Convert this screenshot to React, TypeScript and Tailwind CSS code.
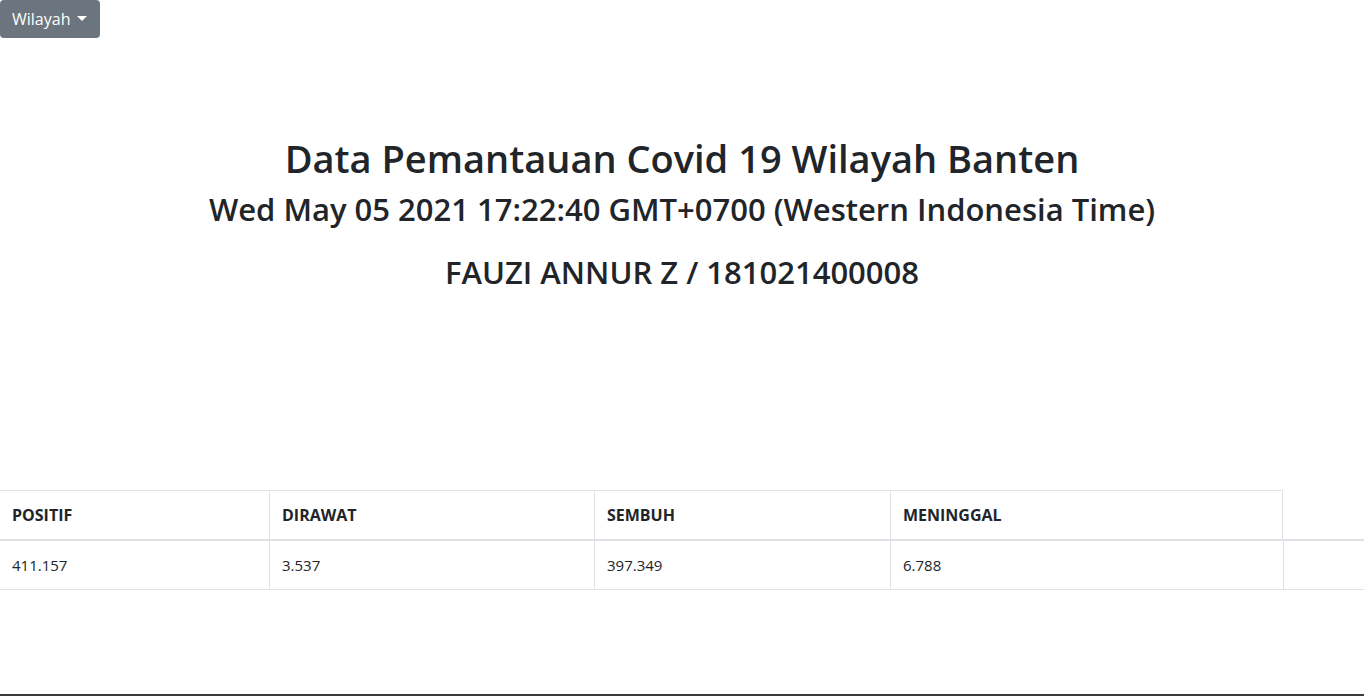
import React from 'react';

const columns = ['POSITIF', 'DIRAWAT', 'SEMBUH', 'MENINGGAL'];
const values = ['411.157', '3.537', '397.349', '6.788'];

const App: React.FC = () => {
  return (
    <div
      className="min-h-screen flex flex-col bg-white text-[#212529] text-[16px] leading-6"
      style={{ fontFamily: '"Open Sans", "Noto Sans", sans-serif' }}
    >
      <div>
        <button className="flex items-center gap-[7px] h-[38px] pl-3 pr-[13px] bg-[#6c757d] text-white rounded-[4px]">
          Wilayah
          <span className="w-0 h-0 border-x-[5px] border-x-transparent border-t-[5px] border-t-white mt-[-2px]"></span>
        </button>
      </div>

      <div className="text-center mt-[98px]">
        <h1 className="text-[38px] leading-[44px] font-semibold">Data Pemantauan Covid 19 Wilayah Banten</h1>
        <h2 className="text-[31px] leading-[36px] font-semibold mt-[11px]">Wed May 05 2021 17:22:40 GMT+0700 (Western Indonesia Time)</h2>
        <h3 className="text-[31px] leading-[36px] font-semibold mt-[27px]">FAUZI ANNUR Z / 181021400008</h3>
      </div>

      <div className="mt-[200px]">
        <div className="grid grid-cols-[269px_325px_296px_393px_1fr]">
          {columns.map((c, i) => (
            <div
              key={c}
              className={`px-3 py-3 font-bold text-[16px] border-t border-[#dee2e6] ${i > 0 ? 'border-l' : ''} ${i === columns.length - 1 ? 'border-r' : ''}`}
            >
              {c}
            </div>
          ))}
          <div></div>
        </div>
        <div className="h-[2px] bg-[#dee2e6]"></div>
        <div className="grid grid-cols-[269px_325px_296px_393px_1fr] border-b border-[#dee2e6]">
          {values.map((v, i) => (
            <div key={i} className={`px-3 py-3 text-[15px] border-[#dee2e6] ${i > 0 ? 'border-l' : ''}`}>
              {v}
            </div>
          ))}
          <div className="border-l border-[#dee2e6]"></div>
        </div>
      </div>

      <div className="flex-1"></div>
      <div className="h-[2px] bg-[#3c3c3c]"></div>
    </div>
  );
};

export default App;
